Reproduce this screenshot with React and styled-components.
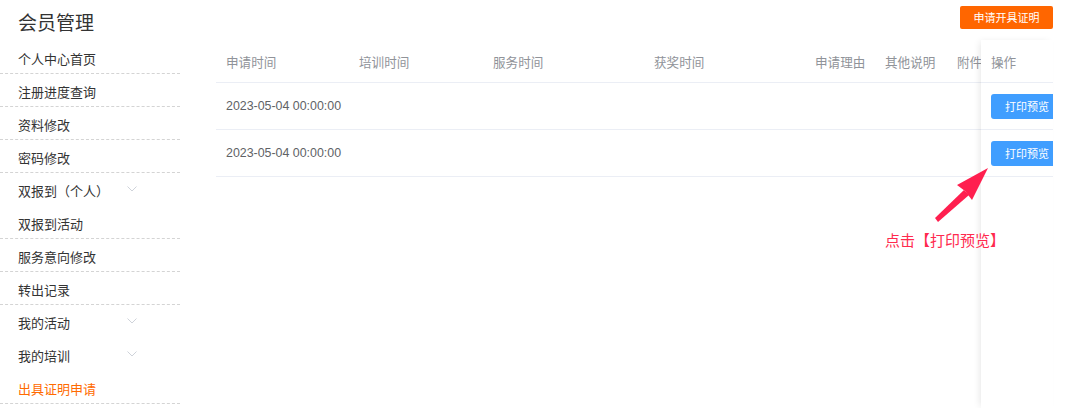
import React from 'react';
import styled, { createGlobalStyle } from 'styled-components';

const Global = createGlobalStyle`
  html, body { margin: 0; padding: 0; background: #fff; }
  body { font-family: "Liberation Sans", "Noto Sans CJK SC", sans-serif; }
`;

const Page = styled.div`
  display: flex;
  width: 1080px;
  height: 408px;
  overflow: hidden;
  position: relative;
  background: #fff;
`;

const Sidebar = styled.aside`
  width: 180px;
  flex: none;
  font-family: "Noto Sans CJK SC", sans-serif;
`;

const Title = styled.h2`
  margin: 0;
  box-sizing: border-box;
  height: 41px;
  padding: 4px 0 0 18px;
  line-height: 36px;
  font-size: 19px;
  font-weight: normal;
  color: #333;
`;

const MenuItem = styled.div`
  box-sizing: border-box;
  height: 33px;
  padding: 8px 43px 0 18px;
  line-height: 20px;
  font-size: 13px;
  color: ${p => (p.$active ? '#ff6a00' : '#333')};
  border-bottom: 1px dashed ${p => (p.$sub ? 'transparent' : '#d4d4d4')};
  display: flex;
  justify-content: space-between;
  align-items: flex-start;
`;

const Chevron = styled.svg`
  width: 10px;
  height: 6px;
  margin-top: 5px;
  flex: none;
`;

const Main = styled.main`
  flex: 1;
  display: flex;
  flex-direction: column;
  padding: 6px 27px 0 36px;
  min-width: 0;
`;

const TopBar = styled.div`
  display: flex;
  justify-content: flex-end;
  margin-bottom: 11px;
`;

const ApplyButton = styled.button`
  width: 93px;
  height: 23px;
  padding: 0;
  border: none;
  border-radius: 2px;
  background: #ff6600;
  color: #fff;
  font-size: 11px;
  font-family: "Noto Sans CJK SC", sans-serif;
  line-height: 23px;
`;

const Table = styled.div`
  flex: 1;
  display: flex;
  min-height: 0;
`;

const ScrollPart = styled.div`
  flex: 1 1 0;
  overflow: hidden;
  min-width: 0;
`;

const FixedPart = styled.div`
  width: 72px;
  flex: none;
  overflow: hidden;
  background: #fff;
  box-shadow: -3px 0 7px -2px rgba(0, 0, 0, 0.1);
  z-index: 1;
`;

const Row = styled.div`
  display: grid;
  grid-template-columns: ${p => p.$cols};
  box-sizing: border-box;
  height: ${p => (p.$head ? 43 : 47)}px;
  border-bottom: 1px solid #ebeef5;
`;

const Cell = styled.div`
  padding-left: 10px;
  display: flex;
  align-items: center;
  white-space: nowrap;
  overflow: hidden;
  font-size: ${p => (p.$head ? 12.6 : 12.4)}px;
  color: ${p => (p.$head ? '#909399' : '#606266')};
  font-family: ${p => (p.$head ? '"Noto Sans CJK SC", sans-serif' : '"Liberation Sans", "Noto Sans CJK SC", sans-serif')};
`;

const PrintButton = styled.button`
  flex: none;
  width: 72px;
  height: 25px;
  padding: 0 0 0 14px;
  text-align: left;
  border: none;
  border-radius: 3px;
  background: #409eff;
  color: #fff;
  font-size: 11px;
  font-family: "Noto Sans CJK SC", sans-serif;
`;

const Arrow = styled.svg`
  position: absolute;
  z-index: 2;
  left: 930px;
  top: 160px;
  width: 70px;
  height: 70px;
`;

const Note = styled.div`
  position: absolute;
  z-index: 2;
  left: 885px;
  top: 229px;
  font-size: 15px;
  line-height: 22px;
  color: #ff2a4e;
  font-family: "Noto Sans CJK SC", sans-serif;
`;

const menu = [
  { label: '个人中心首页' },
  { label: '注册进度查询' },
  { label: '资料修改' },
  { label: '密码修改' },
  { label: '双报到（个人）', sub: true },
  { label: '双报到活动' },
  { label: '服务意向修改' },
  { label: '转出记录' },
  { label: '我的活动', sub: true },
  { label: '我的培训', sub: true },
  { label: '出具证明申请', active: true },
];

const cols = '133px 134px 161px 161px 70px 72px 80px';
const heads = ['申请时间', '培训时间', '服务时间', '获奖时间', '申请理由', '其他说明', '附件'];
const rows = ['2023-05-04 00:00:00', '2023-05-04 00:00:00'];

export default function App() {
  return (
    <>
      <Global />
      <Page>
        <Sidebar>
          <Title>会员管理</Title>
          {menu.map(m => (
            <MenuItem key={m.label} $sub={m.sub} $active={m.active}>
              <span>{m.label}</span>
              {m.sub && (
                <Chevron viewBox="0 0 10 6">
                  <polyline points="0.5,0.5 5,5 9.5,0.5" fill="none" stroke="#cfd3da" strokeWidth="1" />
                </Chevron>
              )}
            </MenuItem>
          ))}
        </Sidebar>
        <Main>
          <TopBar>
            <ApplyButton>申请开具证明</ApplyButton>
          </TopBar>
          <Table>
            <ScrollPart>
              <Row $head $cols={cols}>
                {heads.map(h => (
                  <Cell $head key={h}>{h}</Cell>
                ))}
              </Row>
              {rows.map((r, i) => (
                <Row key={i} $cols={cols}>
                  <Cell>{r}</Cell>
                  <Cell />
                  <Cell />
                  <Cell />
                  <Cell />
                  <Cell />
                  <Cell />
                </Row>
              ))}
            </ScrollPart>
            <FixedPart>
              <Row $head $cols="1fr">
                <Cell $head>操作</Cell>
              </Row>
              {rows.map((r, i) => (
                <Row key={i} $cols="1fr">
                  <Cell>
                    <PrintButton>打印预览</PrintButton>
                  </Cell>
                </Row>
              ))}
            </FixedPart>
          </Table>
        </Main>
        <Arrow viewBox="0 0 70 70">
          <polygon points="5,58 34,30 39,35 8,62" fill="#ff1f4f" />
          <polygon points="58,8 27,25 35,31 42,40" fill="#ff1f4f" />
        </Arrow>
        <Note>点击【打印预览】</Note>
      </Page>
    </>
  );
}
